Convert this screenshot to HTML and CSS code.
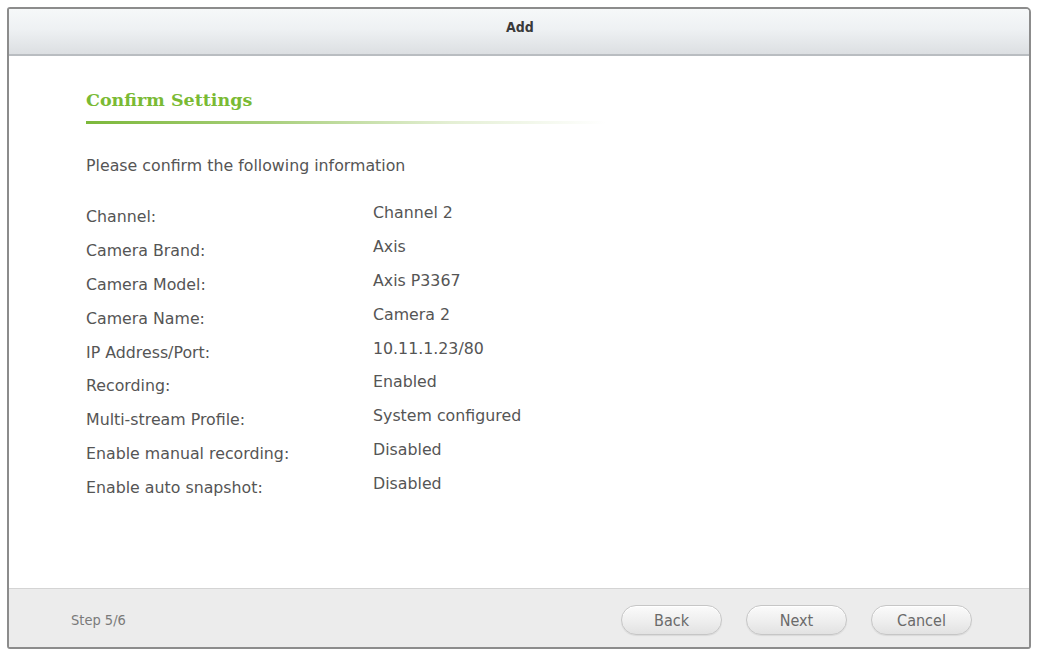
FILE: index.html
```html
<!DOCTYPE html>
<html>
<head>
<meta charset="utf-8">
<title>Add</title>
<link rel="stylesheet" href="styles.css">
</head>
<body>
<div class="dialog">
  <div class="titlebar">Add</div>
  <div class="content">
    <h2 class="section-title">Confirm Settings</h2>
    <div class="section-rule"></div>
    <p class="intro">Please confirm the following information</p>
    <div class="info">
      <div class="label">Channel:</div><div class="value">Channel 2</div>
      <div class="label">Camera Brand:</div><div class="value">Axis</div>
      <div class="label">Camera Model:</div><div class="value">Axis P3367</div>
      <div class="label">Camera Name:</div><div class="value">Camera 2</div>
      <div class="label">IP Address/Port:</div><div class="value">10.11.1.23/80</div>
      <div class="label">Recording:</div><div class="value">Enabled</div>
      <div class="label">Multi-stream Profile:</div><div class="value">System configured</div>
      <div class="label">Enable manual recording:</div><div class="value">Disabled</div>
      <div class="label">Enable auto snapshot:</div><div class="value">Disabled</div>
    </div>
  </div>
  <div class="footer">
    <span class="step">Step 5/6</span>
    <div class="buttons">
      <button class="btn">Back</button>
      <button class="btn">Next</button>
      <button class="btn">Cancel</button>
    </div>
  </div>
</div>
</body>
</html>
```

FILE: styles.css
```css
html, body {
  margin: 0;
  padding: 0;
  background: #ffffff;
}

body {
  padding: 7px 0 0 7px;
  font-family: "DejaVu Sans", "Verdana", sans-serif;
}

.dialog {
  width: 1020px;
  height: 638px;
  border: 2px solid #8c8c8c;
  border-radius: 3px 5px 3px 3px;
  display: flex;
  flex-direction: column;
  background: #ffffff;
  overflow: hidden;
}

.titlebar {
  flex: none;
  height: 47px;
  box-sizing: border-box;
  display: flex;
  align-items: center;
  justify-content: center;
  padding: 0 0 10px 2px;
  background: linear-gradient(to bottom, #f6f8f9 0%, #eef1f3 45%, #dcdfe2 100%);
  border-bottom: 2px solid #b9bdc1;
  font-family: "DejaVu Sans Condensed", "Liberation Sans Narrow", "DejaVu Sans", sans-serif;
  font-weight: bold;
  font-size: 14px;
  color: #3a3a3a;
}

.content {
  flex: 1;
  padding: 34px 0 0 77px;
  color: #555555;
}

.section-title {
  margin: 0;
  font-family: "DejaVu Serif", "Liberation Serif", serif;
  font-weight: bold;
  font-size: 17.5px;
  line-height: 20px;
  color: #7aba34;
}

.section-rule {
  margin-top: 11px;
  width: 520px;
  height: 3px;
  background: linear-gradient(to right, #7cb83a 0%, #a8cf7c 35%, #e4efd4 70%, rgba(255,255,255,0) 100%);
}

.intro {
  margin: 32px 0 0 0;
  font-size: 15.8px;
  line-height: 20px;
  color: #555555;
}

.info {
  margin-top: 24px;
  display: grid;
  grid-template-columns: 287px auto;
  grid-auto-rows: 33.9px;
  font-size: 15.8px;
  color: #555555;
}

.label {
  line-height: 20px;
  padding-top: 7px;
}

.value {
  line-height: 20px;
  padding-top: 3px;
}

.footer {
  flex: none;
  height: 58px;
  background: #ececec;
  border-top: 1px solid #d4d4d4;
  display: flex;
  align-items: center;
  justify-content: space-between;
  padding: 0 57px 0 62px;
}

.step {
  font-family: "DejaVu Sans Condensed", "Liberation Sans Narrow", "DejaVu Sans", sans-serif;
  font-size: 14.5px;
  color: #7a7a7a;
  padding-top: 4px;
}

.buttons {
  display: flex;
  gap: 24px;
  padding-top: 4px;
}

.btn {
  width: 101px;
  height: 30px;
  border-radius: 15px;
  border: 1px solid #c6c6c6;
  background: linear-gradient(to bottom, #fbfbfb 0%, #eeeeee 55%, #e2e2e2 100%);
  box-shadow: inset 0 1px 0 #ffffff, 0 1px 1px rgba(0,0,0,0.08);
  font-family: "DejaVu Sans Condensed", "Liberation Sans Narrow", "DejaVu Sans", sans-serif;
  font-size: 16px;
  color: #6a6a6a;
  padding: 0;
}
```
